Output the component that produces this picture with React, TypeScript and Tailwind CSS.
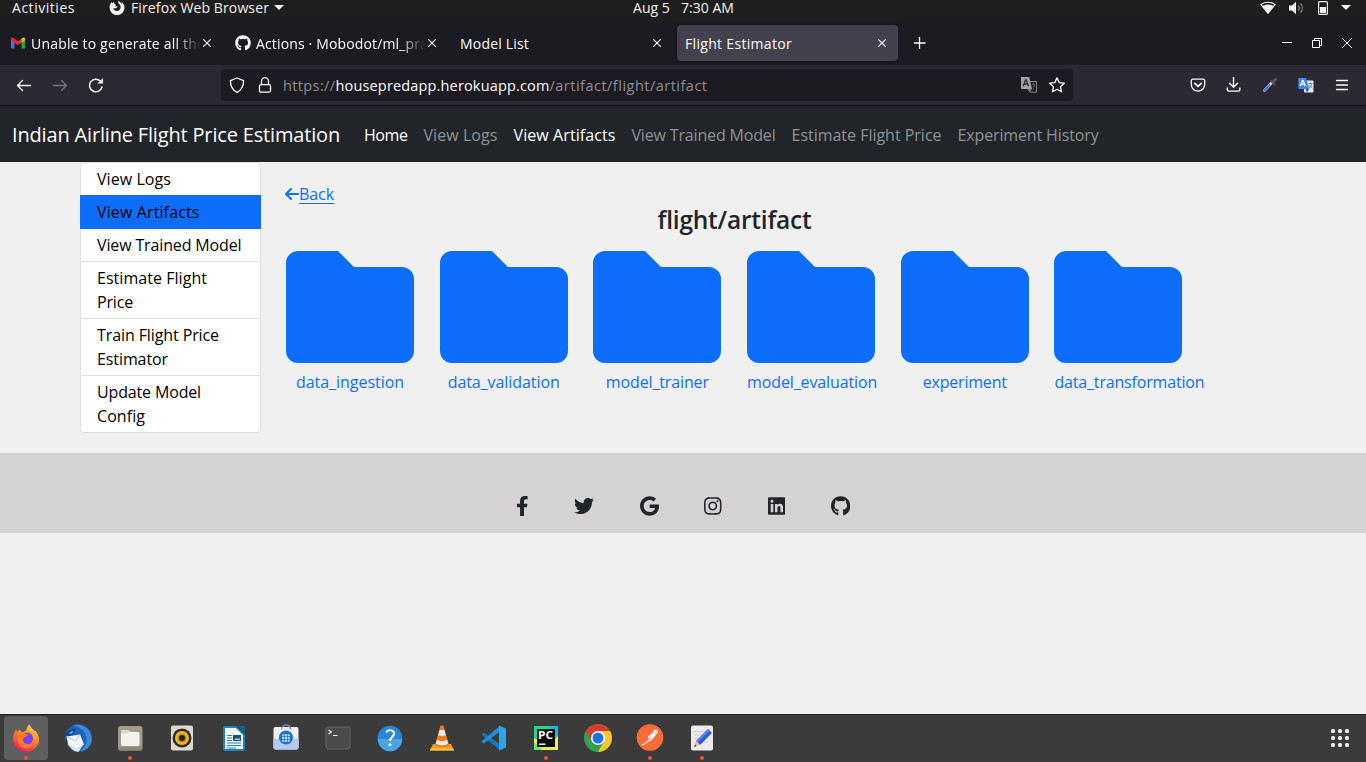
import { useLayoutEffect, useRef, type ReactNode } from "react";
import { FaFacebookF, FaTwitter, FaGoogle, FaInstagram, FaLinkedin, FaGithub } from "react-icons/fa";
import { FaArrowLeft } from "react-icons/fa6";

/* A single line of text whose letter spacing is tuned so that it fills `w` pixels. */
function Fit({ w, children, className = "" }: { w: number; children: string; className?: string }) {
  const ref = useRef<HTMLSpanElement>(null);
  useLayoutEffect(() => {
    const el = ref.current;
    if (!el) return;
    el.style.letterSpacing = "0px";
    const natural = el.getBoundingClientRect().width;
    el.style.letterSpacing = `${(w - natural) / children.length}px`;
  }, [w, children]);
  return (
    <span ref={ref} className={`inline-block shrink-0 whitespace-pre ${className}`}>
      {children}
    </span>
  );
}

function Close() {
  return (
    <svg className="size-2 shrink-0" viewBox="0 0 8 8" stroke="#fbfbfe" strokeWidth="1.1">
      <path d="M0 0l8 8M8 0L0 8" />
    </svg>
  );
}

function TopBar() {
  return (
    <div className="grid h-[21px] grid-cols-3 bg-[#1e1e1e] text-[14px] leading-[15px] text-[#f2f2f2]">
      <div className="flex h-[15px] items-center pl-3">
        <Fit w={63}>Activities</Fit>
        <svg className="ml-[34px] size-4 shrink-0" viewBox="0 0 16 16">
          <path
            fill="#f2f2f2"
            d="M2.6 2.2C1.200 3.500.4 5.500.6 7.900.9 12 4.100 15 8.100 15c4.200 0 7.400-3.200 7.400-7.300 0-2.700-1.300-5-3.500-6.300.8 1 1.200 2 1.100 3C12 2.700 10.300 1.200 9 .8c.5.9.5 1.800.1 2.400 1.600.7 2.600 2.300 2.500 4C11.500 9.600 10 11 8 11c-1.900 0-3.500-1.200-3.700-3 .9.6 2 .6 2.900 0 .6-.4 1.200-.5 1.600-.9-.5-.8-1.800-.8-2.600-.7L6.800 5 5.300 3.600 4.900 1.700 3.600 3.200z"
          />
        </svg>
        <Fit w={138} className="ml-[6px]">Firefox Web Browser</Fit>
        <svg className="ml-[5px] h-[5px] w-[10px] shrink-0" viewBox="0 0 10 5">
          <path d="M0 0h10L5 5z" fill="#f2f2f2" />
        </svg>
      </div>
      <div className="flex h-[15px] items-center justify-center pl-px">
        <Fit w={101}>Aug 5   7:30 AM</Fit>
      </div>
      <div className="flex h-[15px] items-center justify-end pr-[15px]">
        <svg className="mr-px h-[13px] w-4" viewBox="0 0 16 13">
          <path d="M1 3.500C5 .5 11 .5 15 3.500L8 12.300z" fill="none" stroke="#f2f2f2" strokeWidth="1.200" />
          <path d="M2.500 5.200C6 3 10 3 13.500 5.200L8 12.300z" fill="#f2f2f2" />
        </svg>
        <svg className="ml-3 mr-px h-[14px] w-4" viewBox="0 0 16 14">
          <path d="M0 4.500h3L7 .8v12.400L3 9.500H0z" fill="#f2f2f2" />
          <path d="M9.300 4.500c1.200 1.500 1.200 3.500 0 5M11.500 2.500c2.400 2.600 2.400 6.400 0 9" fill="none" stroke="#8a8a8a" strokeWidth="1.200" />
        </svg>
        <svg className="ml-3 h-[14px] w-[10px]" viewBox="0 0 10 14">
          <rect x=".6" y=".6" width="8.800" height="12.800" rx="1" fill="none" stroke="#f2f2f2" strokeWidth="1.200" />
          <path d="M2 6h6v6H2z" fill="#f2f2f2" />
        </svg>
        <svg className="ml-[13px] h-[5px] w-[10px]" viewBox="0 0 10 5">
          <path d="M0 0h10L5 5z" fill="#f2f2f2" />
        </svg>
      </div>
    </div>
  );
}

function TabBar() {
  const tab = "flex h-9 w-[221px] shrink-0 items-center rounded-[4px] pl-2 pr-3";
  const fade = "min-w-0 flex-1 overflow-hidden [mask-image:linear-gradient(to_right,#000_calc(100%-28px),transparent_calc(100%-2px))]";
  return (
    <div className="flex h-11 items-center bg-[#1c1b22] text-[14px] text-[#fbfbfe]">
      <div className="flex gap-1 pl-[2px]">
        <div className={tab}>
          <svg className="mr-[5px] size-4 shrink-0" viewBox="0 0 16 16">
            <path d="M1 13.500V4.500l3.500 2.600v6.400z" fill="#4f6df5" />
            <path d="M15 13.500V4.500l-3.500 2.600v6.400z" fill="#0faf54" />
            <path d="M1 3.500C1 2.400 2.600 2 3.600 3L8 6.400 12.400 3v4L8 10.300 1 5.200z" fill="#ee2737" />
            <path d="M12.400 3C13.400 2 15 2.400 15 3.800v1.500L11.500 8V3.700z" fill="#fbbc04" />
          </svg>
          <div className={fade}><Fit w={174}>Unable to generate all the</Fit></div>
          <Close />
        </div>
        <div className={tab}>
          <FaGithub className="mr-[5px] size-4 shrink-0" />
          <div className={fade}><Fit w={172}>Actions · Mobodot/ml_pra</Fit></div>
          <Close />
        </div>
        <div className={tab}>
          <div className="flex-1"><Fit w={69}>Model List</Fit></div>
          <Close />
        </div>
        <div className={`${tab} bg-[#42414d] shadow-[0_0_3px_rgba(0,0,0,0.5)]`}>
          <div className="flex-1"><Fit w={107}>Flight Estimator</Fit></div>
          <Close />
        </div>
      </div>
      <svg className="ml-4 size-3" viewBox="0 0 12 12" stroke="#fbfbfe" strokeWidth="1.300">
        <path d="M5.500 0v12M-.5 6h12" />
      </svg>
      <svg className="ml-auto mr-[14px] h-[10px] w-[72px]" viewBox="0 0 72 10" fill="none" stroke="#fbfbfe">
        <path d="M2 4.500h10" />
        <path d="M32.500 2.500h7v7h-7zM34.500 2.500v-2h7v7h-2" />
        <path d="M62 0l10 10M72 0L62 10" />
      </svg>
    </div>
  );
}

function Toolbar() {
  return (
    <div className="flex h-[41px] items-center border-b border-[#0c0c0d] bg-[#2b2a33] px-4 text-[#fbfbfe]">
      <div className="flex w-[205px] items-center gap-5">
        <svg className="size-4" viewBox="0 0 16 16" fill="none" stroke="#fbfbfe" strokeWidth="1.300" strokeLinecap="round" strokeLinejoin="round">
          <path d="M14.500 8.500H1.500M6.500 3.500l-5 5 5 5" />
        </svg>
        <svg className="size-4" viewBox="0 0 16 16" fill="none" stroke="#77767e" strokeWidth="1.300" strokeLinecap="round" strokeLinejoin="round">
          <path d="M1.500 8.500h13M9.500 3.500l5 5-5 5" />
        </svg>
        <svg className="size-4" viewBox="0 0 16 16" fill="none" stroke="#fbfbfe" strokeWidth="1.400" strokeLinecap="round">
          <path d="M14 10A6.300 6.300 0 1 1 12.300 4" />
          <path d="M14.700 2v4.200h-4.400z" fill="#fbfbfe" strokeWidth=".6" />
        </svg>
      </div>
      <div className="flex h-8 w-[852px] items-center rounded-[4px] bg-[#1c1b22] px-2 text-[14.500px]">
        <svg className="size-4" viewBox="0 0 16 16" fill="none" stroke="#fbfbfe" strokeWidth="1.300" strokeLinejoin="round">
          <path d="M8 1l6.600 2.600c0 5.600-2 9.600-6.600 11.800C3.400 13.200 1.400 9.200 1.400 3.600z" />
        </svg>
        <svg className="ml-3 size-4" viewBox="0 0 16 16" fill="none" stroke="#fbfbfe" strokeWidth="1.300">
          <rect x="2.500" y="7.600" width="11" height="7.600" rx="1.500" />
          <path d="M4.500 7.600V4.200a3.500 3.500 0 0 1 7 0v3.400" />
        </svg>
        <div className="ml-[10px] flex flex-1 pt-[2px]">
          <Fit w={52.5} className="text-[#8f8e96]">https://</Fit>
          <Fit w={214}>housepredapp.herokuapp.com</Fit>
          <Fit w={158} className="text-[#8f8e96]">/artifact/flight/artifact</Fit>
        </div>
        <svg className="size-4" viewBox="0 0 16 16">
          <path d="M6 4.500h9.500v10.700H9L6 11" fill="none" stroke="#88878e" />
          <path d="M0 0h8.200l2.800 12H1a1 1 0 0 1-1-1z" fill="#a3a2a8" />
          <path d="M7 12h4l-2 3z" fill="#77767d" />
          <path d="M2.200 9L4.500 2.800h.7L7.500 9M3 7h3.800" fill="none" stroke="#2a2930" strokeWidth="1.300" />
          <path d="M11.300 8c.2-1.500 2.700-1.300 2.400.3-.2.900-1.200.9-1.200 2M12.500 11.500v1" fill="none" stroke="#88878e" />
        </svg>
        <svg className="ml-3 size-4" viewBox="0 0 16 16" fill="none" stroke="#fbfbfe" strokeWidth="1.300" strokeLinejoin="round">
          <path d="M8 .9l2.200 4.700 5.100.6-3.800 3.500 1 5.100L8 12.300l-4.500 2.500 1-5.100L.7 6.200l5.100-.6z" />
        </svg>
      </div>
      <div className="ml-auto flex items-center gap-5">
        <svg className="size-4" viewBox="0 0 16 16" fill="none" stroke="#fbfbfe" strokeWidth="1.300" strokeLinecap="round" strokeLinejoin="round">
          <path d="M2.800 2.200h10.400a1.500 1.500 0 0 1 1.500 1.500V7.500a6.700 6.700 0 0 1-13.400 0V3.700a1.500 1.500 0 0 1 1.500-1.500z" />
          <path d="M4.800 6.300L8 9.300l3.200-3" strokeWidth="1.600" />
        </svg>
        <svg className="size-4" viewBox="0 0 16 16" fill="none" stroke="#fbfbfe" strokeWidth="1.400" strokeLinecap="round" strokeLinejoin="round">
          <path d="M7.500 .5v9.500M3.500 6.300l4 4 4-4M1.300 11v1.500c0 1 .6 1.600 1.600 1.600h9.400c1 0 1.600-.6 1.600-1.600V11" />
        </svg>
        <svg className="size-4" viewBox="0 0 16 16" fill="none" strokeLinecap="round">
          <path d="M2.500 13.500l7.500-8" stroke="#d7dbe8" strokeWidth="2.600" />
          <path d="M2.600 13.500l5-5.300" stroke="#3568e0" strokeWidth="1.700" />
          <path d="M9 4l3.500 3.500" stroke="#56555c" strokeWidth="1.800" />
          <path d="M11.500 4.500L13.800 2.200" stroke="#5d5752" strokeWidth="3" />
        </svg>
        <svg className="size-4" viewBox="0 0 16 16">
          <rect x="6" y="3.500" width="9.500" height="12" rx="1" fill="#e6e9ef" />
          <path d="M.8 1h7.400l3 11H1.300A1 1 0 0 1 .3 11V1.500z" fill="#4285f4" />
          <path d="M7.500 12h3.700L9 15.500z" fill="#1f57c4" />
          <path d="M2.300 9l2.200-5.700h.6L7.300 9M3.200 7.200h3.200" fill="none" stroke="#fff" strokeWidth="1.300" />
          <path d="M10.500 6.500h4M12.300 5.500v1M14 6.500c-.5 2-1.500 3.500-3 4.500M11.500 8c.7 1.500 1.700 2.400 3 3.200" fill="none" stroke="#4285f4" strokeWidth=".9" />
        </svg>
        <svg className="size-4" viewBox="0 0 16 16" stroke="#fbfbfe" strokeWidth="1.300" strokeLinecap="round">
          <path d="M2.500 3.500h11M2.500 8h11M2.500 12.500h11" />
        </svg>
      </div>
    </div>
  );
}

const navLinks = [
  { label: "Home", w: 43.5, on: true },
  { label: "View Logs", w: 74, on: false },
  { label: "View Artifacts", w: 102, on: true },
  { label: "View Trained Model", w: 144, on: false },
  { label: "Estimate Flight Price", w: 150, on: false },
  { label: "Experiment History", w: 141, on: false },
];

function Navbar() {
  return (
    <nav className="flex h-14 items-center bg-[#212529] pl-3 pt-[2px] text-[16px]">
      <Fit w={328} className="mr-6 text-[20px] text-white">Indian Airline Flight Price Estimation</Fit>
      <div className="flex gap-4">
        {navLinks.map((l) => (
          <a key={l.label} href="#" className={l.on ? "text-white" : "text-[#909294]"}>
            <Fit w={l.w}>{l.label}</Fit>
          </a>
        ))}
      </div>
    </nav>
  );
}

const menu: { lines: [string, number][]; box: string }[] = [
  { lines: [["View Logs", 74]], box: "rounded-t border-x border-t border-[#dfdfdf] bg-white" },
  { lines: [["View Artifacts", 102.5]], box: "border border-[#0d6efd] bg-[#0d6efd]" },
  { lines: [["View Trained Model", 144.5]], box: "border-x border-b border-[#dfdfdf] bg-white" },
  { lines: [["Estimate Flight", 110], ["Price", 36]], box: "border-x border-b border-[#dfdfdf] bg-white" },
  { lines: [["Train Flight Price", 122], ["Estimator", 71]], box: "border-x border-b border-[#dfdfdf] bg-white" },
  { lines: [["Update Model", 104], ["Config", 48]], box: "rounded-b border-x border-b border-[#dfdfdf] bg-white" },
];

function Sidebar() {
  return (
    <ul className="flex w-[181px] shrink-0 flex-col text-[16px] leading-6 text-black">
      {menu.map((m) => (
        <li key={m.lines[0][0]} className={`flex flex-col items-start px-4 py-1 ${m.box}`}>
          {m.lines.map(([t, w]) => (
            <Fit key={t} w={w} className="h-6">{t}</Fit>
          ))}
        </li>
      ))}
    </ul>
  );
}

const folders: [string, number][] = [
  ["data_ingestion", 108],
  ["data_validation", 112],
  ["model_trainer", 103],
  ["model_evaluation", 130],
  ["experiment", 84],
  ["data_transformation", 150],
];

function Content() {
  return (
    <main className="ml-6 w-[899px] pt-5 text-[16px] leading-6 text-[#0d6efd]">
      <a href="#" className="flex h-6 items-center">
        <FaArrowLeft className="h-4 w-[14px]" />
        <Fit w={35} className="underline decoration-1 underline-offset-[3px]">Back</Fit>
      </a>
      <h4 className="flex h-[27px] items-center justify-center text-[24.500px] font-[560] text-[#212529] [font-stretch:100%]">
        <Fit w={154}>flight/artifact</Fit>
      </h4>
      <div className="mt-[18px] grid grid-cols-[repeat(6,153.700px)] pl-px">
        {folders.map(([name, w]) => (
          <a key={name} href="#" className="flex w-fit min-w-32 flex-col">
            <svg className="h-28 w-32" viewBox="0 0 128 112" fill="#0d6efd">
              <path d="M12 0H52L68 16H116a12 12 0 0 1 12 12V100a12 12 0 0 1-12 12H12A12 12 0 0 1 0 100V12A12 12 0 0 1 12 0z" />
            </svg>
            <span className="mt-[7px] flex h-6 justify-center">
              <Fit w={w}>{name}</Fit>
            </span>
          </a>
        ))}
      </div>
    </main>
  );
}

function Footer() {
  return (
    <footer className="mt-5 flex h-20 items-center justify-center gap-[45.800px] bg-[#d4d2d3] pt-[25px] text-[20px] text-[#212529]">
      <FaFacebookF className="w-[12.500px]" />
      <FaTwitter className="w-5" />
      <FaGoogle className="w-[19px]" />
      <FaInstagram className="w-[17.500px]" />
      <FaLinkedin className="w-[17.500px]" />
      <FaGithub className="w-[19.400px]" />
    </footer>
  );
}

const dock: { name: string; running?: boolean; focused?: boolean; art: ReactNode }[] = [
  {
    name: "firefox",
    running: true,
    focused: true,
    art: (
      <>
        <defs>
          <linearGradient id="ff" x1=".8" y1="0" x2=".3" y2="1">
            <stop offset="0" stopColor="#ffe04a" />
            <stop offset=".45" stopColor="#ff8a1f" />
            <stop offset="1" stopColor="#f5156c" />
          </linearGradient>
        </defs>
        <path d="M4 5.500l1.500 3L7.500 5l2 3c2 0 3.500-.5 5-2 .5-3 1.500-4.500 3-5.500 1 3 3.500 4.500 5 6.500 1-.5 1.500 0 1.500.5 2.500 3 3.200 7 3 9-.8 6.500-6 11-13 11C7 27.500 1 22.500 1 15.500 1 11 2.500 8 4 5.500z" fill="url(#ff)" />
        <circle cx="15" cy="14.500" r="6" fill="#7a3ff0" />
        <path d="M5 10c3-2 6-2 8-.5l3 1c0 2-3 2-4 3-2 2-1 5 2 6.500 4 1.500 7.500-1 7.500-4.500 1 6-3 9-7.500 9-5.500 0-9.500-5-9-14.500z" fill="#ff7a2a" />
      </>
    ),
  },
  {
    name: "thunderbird",
    art: (
      <>
        <circle cx="14.500" cy="14" r="13.500" fill="#1f65c0" />
        <path d="M8 1.500C17-2 29 5 27.500 17c-1 6-6 10-11 10.500 6-5 8-12 4-19C18 4 12 2 8 1.500z" fill="#3a8bdc" />
        <path d="M0 16l3-1v12H0z" fill="#3b3b3b" />
        <path d="M1 11c2-5 7-7 11-6l-3 6-6 6z" fill="#164a94" />
        <path d="M5 9l3-2 1.500 1L7 10z" fill="#4fc3f0" />
        <path d="M2.500 12.500L16 10.500l4 10-6 5-9.500-4z" fill="#f4f5f8" />
        <path d="M2.500 12.500l9 4.500L16 10.500" fill="none" stroke="#b9bfca" />
        <path d="M5 21l7 3.500 7-4-4 7c-4 1-8-2-10-6.500z" fill="#dfe3ec" />
      </>
    ),
  },
  {
    name: "files",
    running: true,
    art: (
      <>
        <rect x="2" y="2" width="24.500" height="24.500" rx="3" fill="#a39c8b" />
        <rect x="2" y="23" width="24.500" height="3.500" rx="2" fill="#8f8878" />
        <path d="M5 8c0-1.500.7-2 2-2h5l2 2h7.500c1.500 0 2 .7 2 2v10c0 1.500-.7 2-2 2H7c-1.300 0-2-.7-2-2z" fill="#f4f2f0" />
        <path d="M5 8c0-1.500.7-2 2-2h5l2 2-2 1.500H5z" fill="#dcd8d2" />
      </>
    ),
  },
  {
    name: "rhythmbox",
    art: (
      <>
        <rect x="3" y="1.500" width="22" height="25" rx="2" fill="#dedacb" />
        <circle cx="14" cy="14" r="9.500" fill="#2c2c2c" />
        <circle cx="14" cy="14" r="7" fill="#f0b921" />
        <circle cx="14" cy="14" r="4.500" fill="#c28f12" />
        <circle cx="14" cy="14" r="3" fill="#222" />
      </>
    ),
  },
  {
    name: "writer",
    art: (
      <>
        <path d="M5 2h11l9 9v14a2 2 0 0 1-2 2H5a2 2 0 0 1-2-2V4a2 2 0 0 1 2-2z" fill="#1c84bc" />
        <path d="M17 2h8v8z" fill="#0f5f8d" />
        <path d="M5 4h11l7 7v14H5z" fill="#f2f8fb" />
        <path d="M7 11.500h5M7 14h5M7 16.500h5M7 19h14M7 21.500h14M7 24h9" stroke="#2286bd" strokeWidth="1.200" />
        <rect x="13" y="11" width="8" height="6" fill="#1f4e6d" />
        <path d="M14 16l2.500-2 2 1 1.500-1v2z" fill="#9fd0e8" />
      </>
    ),
  },
  {
    name: "software",
    art: (
      <>
        <rect x="1.500" y="3" width="25" height="22.500" rx="2" fill="#f1f0f0" />
        <path d="M1.500 14.500h25v9a2 2 0 0 1-2 2h-21a2 2 0 0 1-2-2z" fill="#b6c9f5" />
        <path d="M9.500 5.500c0-6 9-6 9 0" fill="none" stroke="#6f8ade" strokeWidth="1.300" />
        <circle cx="14" cy="13.500" r="7" fill="#1c74cf" />
        <path d="M10 10h8v8h-8zM10 12.700h8M10 15.300h8M12.700 10v8M15.300 10v8" fill="none" stroke="#1c74cf" strokeWidth="1" />
        <path d="M10.300 10.300h2v2h-2zM13 10.300h2v2h-2zM15.700 10.300h2v2h-2zM10.300 13h2v2h-2zM13 13h2v2h-2zM15.700 13h2v2h-2zM10.300 15.700h2v2h-2zM13 15.700h2v2h-2zM15.700 15.700h2v2h-2z" fill="#c9def5" />
      </>
    ),
  },
  {
    name: "terminal",
    art: (
      <>
        <rect x="2" y="3" width="24" height="22" rx="2" fill="#4a4a4a" stroke="#626262" />
        <path d="M4.500 6L7.500 8 4.500 10M9 11.500h4.500" fill="none" stroke="#eee" strokeWidth="1.100" />
      </>
    ),
  },
  {
    name: "help",
    art: (
      <>
        <circle cx="14" cy="14" r="12.300" fill="#2588d8" />
        <path d="M1.700 15h24.600a12.300 12.300 0 0 1-24.600 0z" fill="#4aa4e6" />
        <path d="M10.500 8.500c1-3 7.500-3 7.500 1 0 3.500-4 3.500-4 7.500" fill="none" stroke="#fff" strokeWidth="2" />
        <circle cx="14" cy="20.700" r="1.500" fill="#fff" />
      </>
    ),
  },
  {
    name: "vlc",
    art: (
      <>
        <path d="M5 20h18l3 6.500H2z" fill="#f59c1a" />
        <path d="M2 26l.5-1.500h23L26 26.500H2z" fill="#ffc34d" />
        <path d="M12.500 1.500h3L21 21c-3 3-11 3-14 0z" fill="#f07a12" />
        <path d="M11.600 6h4.800l1.400 5c-2 1.500-5.600 1.500-7.600 0zM9 15.500c3 2 7 2 10 0l1.200 4c-3 2.500-9.400 2.500-12.400 0z" fill="#eeebe6" />
      </>
    ),
  },
  {
    name: "vscode",
    art: (
      <>
        <path d="M1.500 10.500l2.300-2L20 20.500v6z" fill="#1579c0" />
        <path d="M1.500 17.500l2.300 2L20 7.500v-6z" fill="#2090d8" />
        <path d="M19 1.500L26 4.500v19L19 26.500z" fill="#2aa5ee" />
      </>
    ),
  },
  {
    name: "pycharm",
    running: true,
    art: (
      <>
        <rect x="2" y="2" width="24" height="24" fill="#21d789" />
        <path d="M17 2h9v13l-6-4z" fill="#16b8e8" />
        <path d="M2 26V14l14 8 10-10v14z" fill="#e9f04d" />
        <path d="M2 26V18l8 8z" fill="#6fe36b" />
        <rect x="5" y="5" width="18" height="18" fill="#0b0b0b" />
        <text
          x="6"
          y="15.200"
          fill="#fff"
          className="font-['Open_Sans','Noto_Sans',sans-serif] text-[11px] font-bold [font-stretch:100%]"
          textLength="15"
          lengthAdjust="spacingAndGlyphs"
        >
          PC
        </text>
        <path d="M7 20.200h6.500" stroke="#fff" strokeWidth="1.400" />
      </>
    ),
  },
  {
    name: "chrome",
    art: (
      <>
        <circle cx="14" cy="14" r="14" fill="#34a04e" />
        <path d="M14 7h12.100A14 14 0 0 1 14 28l6-10.500z" fill="#fcc62d" />
        <path d="M1.900 7A14 14 0 0 1 26.100 7H14L8 17.500z" fill="#db3b2e" />
        <circle cx="14" cy="14" r="7" fill="#fff" />
        <circle cx="14" cy="14" r="5.500" fill="#1a73e8" />
      </>
    ),
  },
  {
    name: "postman",
    running: true,
    art: (
      <>
        <circle cx="14" cy="13.500" r="13.300" fill="#ff6c37" />
        <path d="M12 12.500l5-4 3 2.500-4.500 5-9 5.500-1 .3 1-1.500 6.500-5z" fill="#fff" />
        <circle cx="19.500" cy="7.800" r="2.300" fill="#fff" />
        <path d="M13 12l3.500 3M8 20l7-6" stroke="#f9a184" strokeWidth=".8" />
      </>
    ),
  },
  {
    name: "editor",
    running: true,
    art: (
      <>
        <rect x="3" y="1.500" width="22" height="25" rx="2" fill="#eceaea" />
        <path d="M6 7.500h14M6 11h14M6 14.500h14M6 18h14" stroke="#d3d3d3" />
        <path d="M20 5l4 4L12 21l-4-4z" fill="#2c5fd6" />
        <path d="M20 5l1.500 1.500L9.500 18.500 8 17z" fill="#5c8af0" />
        <path d="M8 17l4 4-6 2z" fill="#e9c79a" />
        <path d="M7 20.500L8.500 22 6 23z" fill="#333" />
      </>
    ),
  },
];

function Dock() {
  return (
    <div className="flex h-12 items-start justify-between border-t border-[#242424] bg-[#3b3b3b] pl-1 pr-[17px] pt-px">
      <div className="flex gap-2">
        {dock.map((d) => (
          <div
            key={d.name}
            className={`flex h-11 w-11 flex-col items-center rounded-[4px] pt-2 ${d.focused ? "bg-[#5f5f5f]" : ""}`}
          >
            <svg className="size-7 shrink-0" viewBox="0 0 28 28">{d.art}</svg>
            {d.running && <span className="mt-1 size-1 rounded-full bg-[#e95420]" />}
          </div>
        ))}
      </div>
      <div className="mt-[13px] grid grid-cols-3 gap-[3px]">
        {Array.from({ length: 9 }, (_, i) => (
          <span key={i} className="size-1 rounded-[1.500px] bg-[#eeeeee]" />
        ))}
      </div>
    </div>
  );
}

export default function App() {
  return (
    <div className="flex h-[762px] w-[1366px] flex-col overflow-hidden bg-[#f0f0f0] font-['Open_Sans','Noto_Sans',sans-serif] [font-stretch:92%]">
      <TopBar />
      <TabBar />
      <Toolbar />
      <Navbar />
      <div className="flex items-start pl-20">
        <Sidebar />
        <Content />
      </div>
      <Footer />
      <div className="flex-1" />
      <Dock />
    </div>
  );
}
